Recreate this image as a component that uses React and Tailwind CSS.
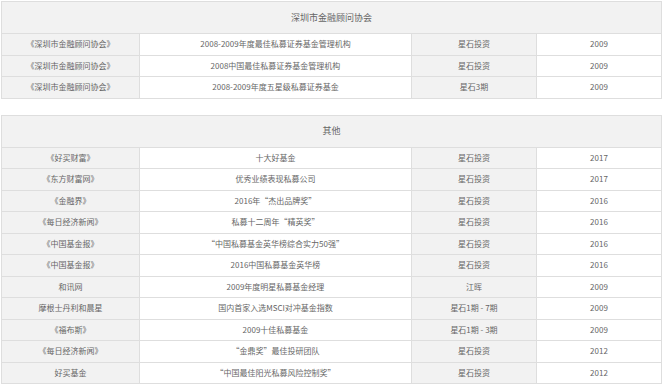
import React from "react";

const groups = [
  {
    title: "深圳市金融顾问协会",
    rows: [
      ["《深圳市金融顾问协会》", "2008-2009年度最佳私募证券基金管理机构", "星石投资", "2009"],
      ["《深圳市金融顾问协会》", "2008中国最佳私募证券基金管理机构", "星石投资", "2009"],
      ["《深圳市金融顾问协会》", "2008-2009年度五星级私募证券基金", "星石3期", "2009"],
    ],
  },
  {
    title: "其他",
    rows: [
      ["《好买财富》", "十大好基金", "星石投资", "2017"],
      ["《东方财富网》", "优秀业绩表现私募公司", "星石投资", "2017"],
      ["《金融界》", "2016年“杰出品牌奖”", "星石投资", "2016"],
      ["《每日经济新闻》", "私募十二周年“精英奖”", "星石投资", "2016"],
      ["《中国基金报》", "“中国私募基金英华榜综合实力50强”", "星石投资", "2016"],
      ["《中国基金报》", "2016中国私募基金英华榜", "星石投资", "2016"],
      ["和讯网", "2009年度明星私募基金经理", "江晖", "2009"],
      ["摩根士丹利和晨星", "国内首家入选MSCI对冲基金指数", "星石1期 - 7期", "2009"],
      ["《福布斯》", "2009十佳私募基金", "星石1期 - 3期", "2009"],
      ["《每日经济新闻》", "“金鼎奖”最佳投研团队", "星石投资", "2012"],
      ["好买基金", "“中国最佳阳光私募风险控制奖”", "星石投资", "2012"],
    ],
  },
];

const AwardTable = ({ title, rows }) => (
  <div className="border border-[#dedede] mb-4">
    <div className="h-[31px] flex items-center justify-center bg-[#f2f2f2] text-[9px] text-[#666]">
      {title}
    </div>
    {rows.map((row, i) => (
      <div
        key={i}
        className="grid grid-cols-[138px_272px_125px_1fr] h-[21.5px] border-t border-[#dedede] text-[8px] text-[#666]"
      >
        <div className="flex items-center justify-center bg-[#f2f2f2] border-r border-[#dedede]">
          {row[0]}
        </div>
        <div className="flex items-center justify-center bg-white border-r border-[#dedede]">
          {row[1]}
        </div>
        <div className="flex items-center justify-center bg-[#f2f2f2] border-r border-[#dedede]">
          {row[2]}
        </div>
        <div className="flex items-center justify-center bg-white">{row[3]}</div>
      </div>
    ))}
  </div>
);

export default function App() {
  return (
    <div
      className="w-[664px] h-[385px] overflow-hidden bg-white pt-px pl-px pr-[2px]"
      style={{ fontFamily: '"Noto Sans CJK SC", "Open Sans", sans-serif' }}
    >
      {groups.map((g) => (
        <AwardTable key={g.title} title={g.title} rows={g.rows} />
      ))}
    </div>
  );
}
